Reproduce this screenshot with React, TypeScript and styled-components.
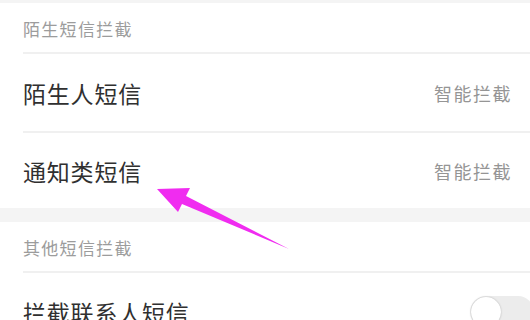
import styled, { createGlobalStyle } from 'styled-components'

const GlobalStyle = createGlobalStyle`
  html, body {
    margin: 0;
    padding: 0;
    background: #fff;
  }
  body {
    font-family: "Noto Sans CJK SC", "Noto Sans", sans-serif;
  }
`

const Page = styled.div`
  position: relative;
  width: 530px;
  height: 320px;
  overflow: hidden;
  background: #fff;
  display: flex;
  flex-direction: column;
`

const Band = styled.div<{ h: number }>`
  height: ${(p) => p.h}px;
  flex: none;
  background: #f4f4f4;
`

const Section = styled.section`
  flex: none;
  padding-left: 23px;
  background: #fff;
`

const SectionTitle = styled.div`
  height: 49px;
  display: flex;
  align-items: center;
  padding-top: 2px;
  box-sizing: border-box;
  font-size: 17px;
  letter-spacing: 1.3px;
  color: #9c9c9c;
`

const Row = styled.div<{ h: number }>`
  height: ${(p) => p.h}px;
  display: flex;
  align-items: center;
  justify-content: space-between;
  border-top: 2px solid #f0f0f0;
  box-sizing: border-box;
  padding-right: 18px;
`

const RowLabel = styled.span`
  font-size: 23px;
  letter-spacing: 0.8px;
  color: #303030;
`

const RowValue = styled.span`
  font-size: 18px;
  letter-spacing: 1.5px;
  color: #959595;
`

const Toggle = styled.div`
  position: relative;
  flex: none;
  width: 64px;
  height: 32px;
  margin-right: -22px;
  border-radius: 16px;
  background: #ececec;
`

const Knob = styled.div`
  position: absolute;
  left: 1px;
  top: 1px;
  width: 30px;
  height: 30px;
  border-radius: 50%;
  background: #fff;
  box-shadow: 0 0 2px rgba(0, 0, 0, 0.25);
`

const Arrow = styled.svg`
  position: absolute;
  left: 0;
  top: 0;
  pointer-events: none;
`

export default function App() {
  return (
    <>
      <GlobalStyle />
      <Page>
        <Band h={3} />
        <Section>
          <SectionTitle>陌生短信拦截</SectionTitle>
          <Row h={79}>
            <RowLabel>陌生人短信</RowLabel>
            <RowValue>智能拦截</RowValue>
          </Row>
          <Row h={77}>
            <RowLabel>通知类短信</RowLabel>
            <RowValue>智能拦截</RowValue>
          </Row>
        </Section>
        <Band h={14} />
        <Section>
          <SectionTitle>其他短信拦截</SectionTitle>
          <Row h={80}>
            <RowLabel>拦截联系人短信</RowLabel>
            <Toggle>
              <Knob />
            </Toggle>
          </Row>
        </Section>
        <Arrow width="530" height="320" viewBox="0 0 530 320">
          <polygon
            points="157,189 190,188 186,196 289,249 182,204 178,212"
            fill="#f02cf0"
          />
        </Arrow>
      </Page>
    </>
  )
}
